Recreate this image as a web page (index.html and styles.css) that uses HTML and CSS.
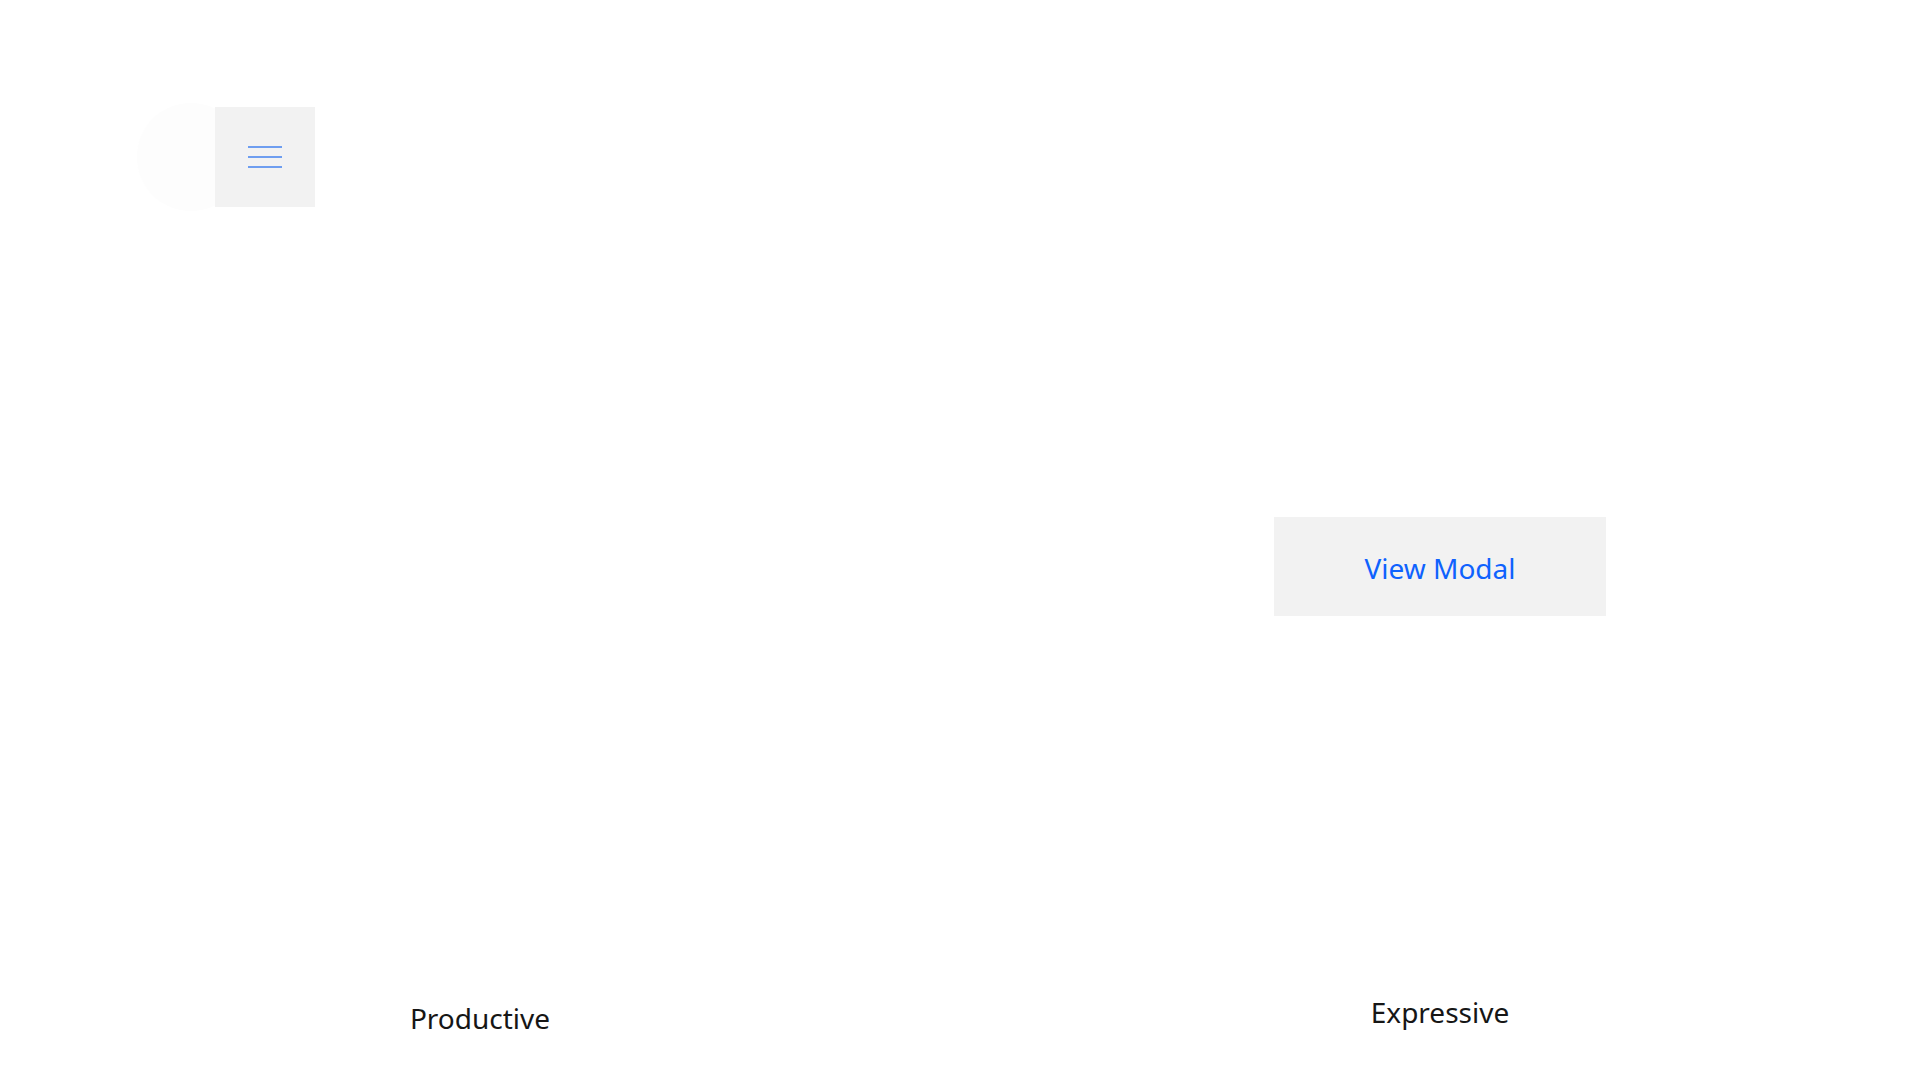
FILE: index.html
```html
<!DOCTYPE html>
<html lang="en">
<head>
<meta charset="utf-8">
<title>Modal demo</title>
<link rel="stylesheet" href="styles.css">
</head>
<body>
<div class="menu-wrap">
  <span class="menu-halo"></span>
  <button class="menu-btn" aria-label="Menu">
    <svg width="34" height="22" viewBox="0 0 34 22">
      <rect x="0" y="0" width="34" height="2" fill="#6f9ef0"/>
      <rect x="0" y="10" width="34" height="2" fill="#6f9ef0"/>
      <rect x="0" y="20" width="34" height="2" fill="#6f9ef0"/>
    </svg>
  </button>
</div>
<main class="columns">
  <section class="col col-left">
    <p class="label label-left">Productive</p>
  </section>
  <section class="col col-right">
    <button class="view-btn">View Modal</button>
    <p class="label label-right">Expressive</p>
  </section>
</main>
</body>
</html>
```
FILE: styles.css
```css
html, body {
  margin: 0;
  padding: 0;
  background: #ffffff;
  font-family: "Noto Sans", "Open Sans", sans-serif;
}
.menu-wrap {
  position: absolute;
  left: 215px;
  top: 107px;
  width: 100px;
  height: 100px;
}
.menu-halo {
  position: absolute;
  left: -78px;
  top: -4px;
  width: 108px;
  height: 108px;
  border-radius: 50%;
  background: #fdfdfd;
}
.menu-btn {
  position: relative;
  width: 100px;
  height: 100px;
  border: 0;
  padding: 0;
  background: #f2f2f2;
  display: flex;
  align-items: center;
  justify-content: center;
}
.menu-btn svg { display: block; }
.columns {
  display: grid;
  grid-template-columns: 1fr 1fr;
  height: 1080px;
}
.col {
  display: flex;
  flex-direction: column;
  align-items: center;
}
.col-left { padding-top: 1000px; }
.col-right { padding-top: 517px; }
.view-btn {
  width: 332px;
  height: 99px;
  border: 0;
  background: #f2f2f2;
  color: #0f62fe;
  font-family: inherit;
  font-size: 28px;
  padding: 2px 0 0 0;
}
.label {
  margin: 0;
  color: #161616;
  font-size: 28px;
  line-height: 36px;
}
.label-right { margin-top: 378px; }
```
